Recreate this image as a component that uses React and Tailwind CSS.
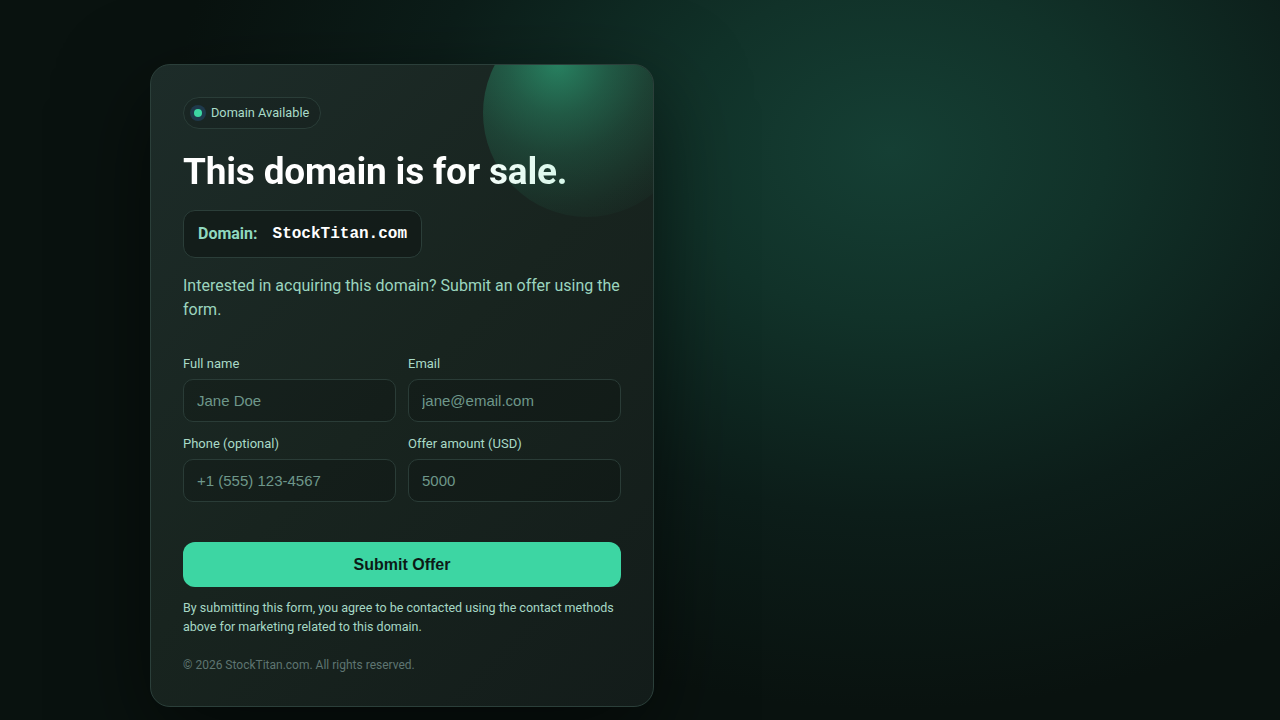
export default function App() {
  const labelCls = "block text-[13px] leading-5 mb-[5px] text-[#a9dac7]";
  const inputCls =
    "w-full h-[43px] rounded-[10px] border border-[#2a3c37] bg-black/15 px-[13px] text-[15px] text-[#d6efe6] placeholder:text-[#6e978a] outline-none font-['Liberation_Sans',Arial,sans-serif]";

  return (
    <div className="min-h-screen w-full bg-[#09120f] bg-[radial-gradient(ellipse_720px_560px_at_890px_150px,#153f34_0%,#113229_30%,#0c1d19_65%,#09120f_100%)] pl-[150px] pt-16 pb-4 font-['Roboto','Noto_Sans',sans-serif]">
      <div className="relative w-[504px] overflow-hidden rounded-[20px] border border-[#2b3f3a] bg-[linear-gradient(135deg,#1d2c29_0%,#18241f_50%,#131c1a_100%)] p-8 shadow-[0_30px_90px_rgba(0,0,0,0.55)]">
        {/* decorative glow orb in the top-right corner */}
        <div className="pointer-events-none absolute left-[332px] top-[-56px] h-[208px] w-[208px] rounded-full bg-[radial-gradient(circle_at_36%_26%,rgba(52,211,153,0.52)_0%,rgba(52,211,153,0.3)_25%,rgba(52,211,153,0.17)_45%,rgba(52,211,153,0.06)_70%,rgba(52,211,153,0.01)_84%)]" />

        <div className="relative">
          <div className="inline-flex h-8 items-center gap-[5px] rounded-full border border-[#2a3d38] bg-black/10 pl-1.5 pr-[11px]">
            <span className="flex h-4 w-4 items-center justify-center rounded-full bg-[#1f394b]">
              <span className="h-2 w-2 rounded-full bg-[#3dd6a3]" />
            </span>
            <span className="text-[12.75px] text-[#a9dcc9]">Domain Available</span>
          </div>

          <h1 className="mt-[23px] text-[37px] font-bold leading-10 tracking-[-0.2px] bg-[linear-gradient(90deg,#ffffff_0%,#ffffff_62%,#c3f4df_100%)] bg-clip-text text-transparent">
            This domain is for sale.
          </h1>

          <div className="mt-[18px] inline-flex items-center rounded-xl border border-[#2b3e39] bg-[#111a18]/80 px-3.5 py-[11px] leading-6">
            <span className="text-base font-bold text-[#8fd8bf]">Domain:</span>
            <span className="ml-[15px] text-base font-bold text-white font-['Liberation_Mono','Courier_New',monospace]">
              StockTitan.com
            </span>
          </div>

          <p className="mt-4 text-base leading-6 text-[#9bd5bf]">
            Interested in acquiring this domain? Submit an offer using the form.
          </p>

          <form className="mt-8" onSubmit={(e) => e.preventDefault()}>
            <div className="grid grid-cols-2 gap-x-3 gap-y-3">
              <div>
                <label className={labelCls}>Full name</label>
                <input className={inputCls} placeholder="Jane Doe" />
              </div>
              <div>
                <label className={labelCls}>Email</label>
                <input className={inputCls} placeholder="jane@email.com" />
              </div>
              <div>
                <label className={labelCls}>Phone (optional)</label>
                <input className={inputCls} placeholder="+1 (555) 123-4567" />
              </div>
              <div>
                <label className={labelCls}>Offer amount (USD)</label>
                <input className={inputCls} placeholder="5000" />
              </div>
            </div>

            <button
              type="submit"
              className="mt-10 h-[45px] w-full rounded-xl bg-[#3dd6a3] text-base font-bold text-[#0c1a16] font-['Liberation_Sans',Arial,sans-serif]"
            >
              Submit Offer
            </button>
          </form>

          <p className="mt-[11px] text-[12.5px] leading-[19px] text-[#a6d8c5]">
            By submitting this form, you agree to be contacted using the contact methods above for marketing related to this domain.
          </p>

          <p className="mt-5 text-xs leading-[18px] text-[#5e7571]">
            © 2026 StockTitan.com. All rights reserved.
          </p>
        </div>
      </div>
    </div>
  );
}
